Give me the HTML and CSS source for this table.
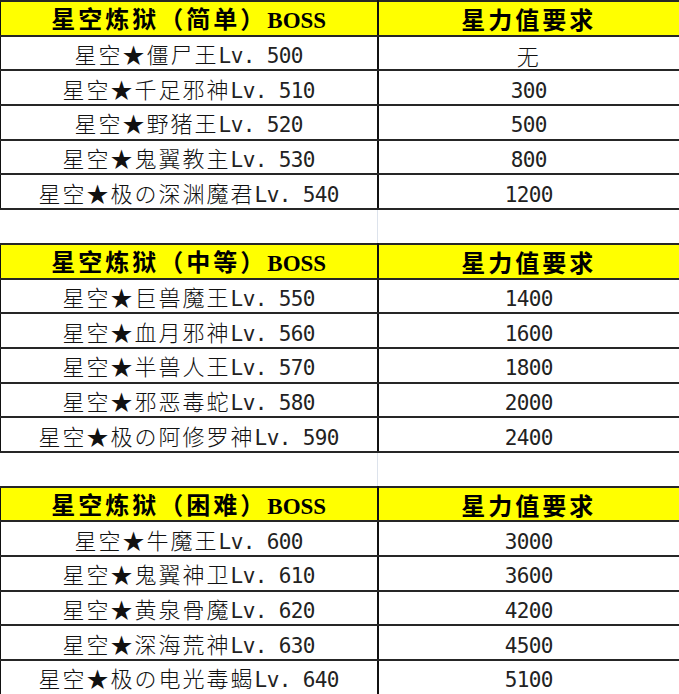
FILE: index.html
```html
<!DOCTYPE html>
<html lang="zh-CN">
<head>
<meta charset="utf-8">
<title>星空炼狱 BOSS</title>
<link rel="stylesheet" href="styles.css">
</head>
<body>
<table class="sheet">
  <colgroup><col class="c-name"><col class="c-req"></colgroup>
  <tbody>
    <tr class="head"><th>星空炼狱（简单）<span class="boss">BOSS</span></th><th>星力值要求</th></tr>
    <tr><td>星空★僵尸王<span class="lat">Lv. 500</span></td><td>无</td></tr>
    <tr><td>星空★千足邪神<span class="lat">Lv. 510</span></td><td><span class="lat">300</span></td></tr>
    <tr><td>星空★野猪王<span class="lat">Lv. 520</span></td><td><span class="lat">500</span></td></tr>
    <tr><td>星空★鬼翼教主<span class="lat">Lv. 530</span></td><td><span class="lat">800</span></td></tr>
    <tr><td>星空★极の深渊魔君<span class="lat">Lv. 540</span></td><td><span class="lat">1200</span></td></tr>
    <tr class="gap"><td></td><td></td></tr>
    <tr class="head"><th>星空炼狱（中等）<span class="boss">BOSS</span></th><th>星力值要求</th></tr>
    <tr><td>星空★巨兽魔王<span class="lat">Lv. 550</span></td><td><span class="lat">1400</span></td></tr>
    <tr><td>星空★血月邪神<span class="lat">Lv. 560</span></td><td><span class="lat">1600</span></td></tr>
    <tr><td>星空★半兽人王<span class="lat">Lv. 570</span></td><td><span class="lat">1800</span></td></tr>
    <tr><td>星空★邪恶毒蛇<span class="lat">Lv. 580</span></td><td><span class="lat">2000</span></td></tr>
    <tr><td>星空★极の阿修罗神<span class="lat">Lv. 590</span></td><td><span class="lat">2400</span></td></tr>
    <tr class="gap"><td></td><td></td></tr>
    <tr class="head"><th>星空炼狱（困难）<span class="boss">BOSS</span></th><th>星力值要求</th></tr>
    <tr><td>星空★牛魔王<span class="lat">Lv. 600</span></td><td><span class="lat">3000</span></td></tr>
    <tr><td>星空★鬼翼神卫<span class="lat">Lv. 610</span></td><td><span class="lat">3600</span></td></tr>
    <tr><td>星空★黄泉骨魔<span class="lat">Lv. 620</span></td><td><span class="lat">4200</span></td></tr>
    <tr><td>星空★深海荒神<span class="lat">Lv. 630</span></td><td><span class="lat">4500</span></td></tr>
    <tr><td>星空★极の电光毒蝎<span class="lat">Lv. 640</span></td><td><span class="lat">5100</span></td></tr>
  </tbody>
</table>
</body>
</html>
```
FILE: styles.css
```css
html, body {
  margin: 0;
  padding: 0;
  background: #ffffff;
}

.sheet {
  border-collapse: collapse;
  table-layout: fixed;
  width: 679px;
  font-family: "Noto Sans CJK SC", sans-serif;
  color: #000;
}

.c-name { width: 377px; }
.c-req { width: 302px; }

.sheet tr {
  height: 34.7px;
}

.sheet td,
.sheet th {
  padding: 0;
  text-align: center;
  vertical-align: middle;
  white-space: nowrap;
  border-top: 2px solid #262626;
  border-bottom: 2px solid #262626;
  border-left: 2px solid #111;
  border-right: 1px solid #c4c4c4;
  line-height: 1;
}

.sheet tr > :first-child {
  border-left: 1px solid #111;
  border-right: 2px solid #111;
}

.sheet td {
  font-size: 22px;
  font-weight: 300;
  letter-spacing: 2px;
  padding-top: 3px;
  color: #111;
}

.sheet th {
  background: #ffff00;
  font-size: 24px;
  font-weight: 700;
  letter-spacing: 3px;
  padding-top: 2px;
}

.boss {
  font-family: "Liberation Serif", serif;
  font-weight: 700;
  font-size: 23px;
  letter-spacing: 0;
}

.lat {
  font-family: "DejaVu Sans Mono", monospace;
  font-size: 21px;
  font-weight: 400;
  letter-spacing: -0.6px;
  color: #222;
}

.sheet .gap td {
  background: #fff;
  border-top: none;
  border-bottom: none;
  border-left: 1px solid #dde3ec;
  border-right: 1px solid #dde3ec;
}

.sheet .gap td:first-child {
  border-left: none;
}
```
